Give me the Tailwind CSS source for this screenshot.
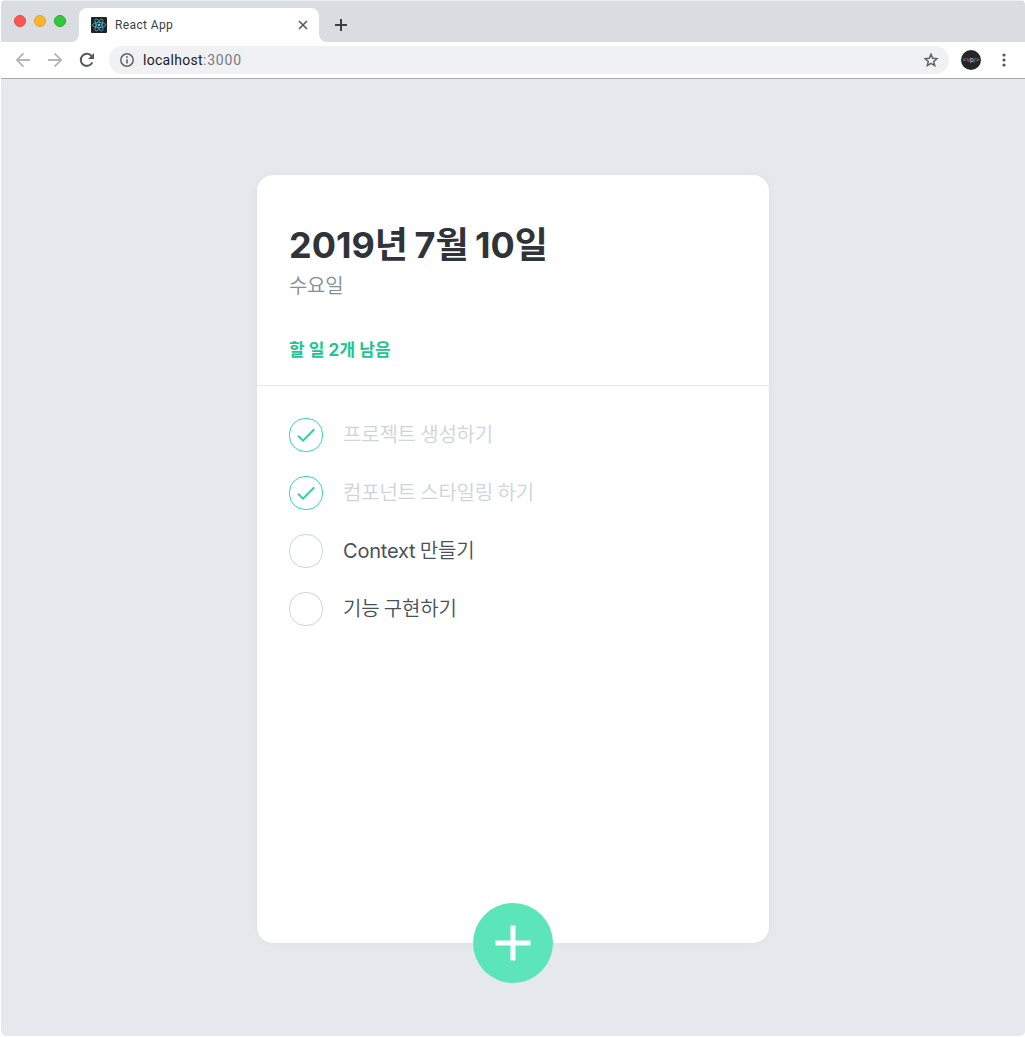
<!DOCTYPE html>
<html lang="ko">
<head>
<meta charset="utf-8">
<title>React App</title>
<script src="https://cdn.jsdelivr.net/npm/@tailwindcss/browser@4"></script>
</head>
<body class="bg-white h-[1037px] overflow-hidden pl-px font-['Inter','Noto_Sans_CJK_KR',sans-serif]">
<div class="h-[1036px] w-[1024px] rounded-[5px] overflow-hidden bg-[#e5e8ed] flex flex-col">
  <!-- tab strip -->
  <header class="h-[42px] shrink-0 bg-[#d9dce1] border-t border-[#eceef1] flex">
    <div class="w-[78px] bg-white shrink-0"><div class="h-full bg-[#d9dce1] rounded-br-lg flex gap-2 pl-[13px] pt-[14px]">
      <span class="size-3 rounded-full bg-[#fc5753] border border-[#df4744]"></span>
      <span class="size-3 rounded-full bg-[#fdb62c] border border-[#de9f34]"></span>
      <span class="size-3 rounded-full bg-[#33c73b] border border-[#27a930]"></span>
    </div></div>
    <div class="w-[240px] shrink-0 bg-[#d9dce1] pt-[7px]"><div class="h-full bg-white rounded-t-lg flex items-center pl-3 pr-[11px]">
      <svg class="size-4" viewBox="0 0 16 16" fill="none"><rect width="16" height="16" rx="1" fill="#222"/><g stroke="#4fb5d5" stroke-width=".75"><ellipse cx="8" cy="8" rx="6.6" ry="2.6"/><ellipse cx="8" cy="8" rx="6.6" ry="2.6" transform="rotate(60 8 8)"/><ellipse cx="8" cy="8" rx="6.6" ry="2.6" transform="rotate(120 8 8)"/></g><circle cx="8" cy="8" r="1.3" fill="#61dafb"/></svg>
      <span class="ml-2 text-[12px] leading-4 text-[#3c4043] font-['Roboto'] tracking-[.37px]">React App</span>
      <svg class="ml-auto size-[10px]" viewBox="0 0 10 10" stroke="#55595e" stroke-width="1.6"><path d="M1 1l8 8M9 1l-8 8"/></svg>
    </div></div>
    <div class="grow bg-white"><div class="h-full bg-[#d9dce1] rounded-bl-lg pl-4 pt-[18px]">
      <svg class="size-3" viewBox="0 0 12 12" stroke="#3c4043" stroke-width="2"><path d="M6 0v12M0 6h12"/></svg>
    </div></div>
  </header>
  <!-- toolbar -->
  <nav class="h-[37px] shrink-0 bg-white border-b border-[#a9abb0] flex items-center">
    <svg class="ml-[14px] size-4" viewBox="0 0 16 16" fill="none" stroke="#b4b6b9" stroke-width="1.8"><path d="M15 8H2M8.5 1.3L1.8 8l6.7 6.7"/></svg>
    <svg class="ml-4 size-4" viewBox="0 0 16 16" fill="none" stroke="#b4b6b9" stroke-width="1.8"><path d="M1 8h13M7.500 1.300L14.200 8l-6.700 6.700"/></svg>
    <svg class="ml-4 size-4" viewBox="0 0 16 16" fill="none"><path d="M13.300 10.300A6 6 0 1 1 12.600 4.200" stroke="#54585d" stroke-width="2"/><path d="M15 1v6H9z" fill="#54585d"/></svg>
    <div class="ml-[14px] h-7 w-[840px] rounded-full bg-[#eff1f3] flex items-center pl-[11px] pr-[11px]">
      <svg class="size-[14px]" viewBox="0 0 14 14" fill="none"><circle cx="7" cy="7" r="6.200" stroke="#5f6368" stroke-width="1.500"/><path d="M7 6.200v4.300M7 3.300v1.600" stroke="#5f6368" stroke-width="1.600"/></svg>
      <span class="ml-[9px] text-[14px] leading-4 text-[#202124] font-['Roboto'] tracking-[.3px]">localhost<span class="text-[#777b80] tracking-[.8px]">:3000</span></span>
      <svg class="ml-auto size-[14px]" viewBox="0 0 14 14" fill="none" stroke="#5f6368" stroke-width="1.500"><path d="M7 1.200l1.700 4 4.300.4-3.300 2.800 1 4.200L7 10.400l-3.700 2.200 1-4.200L1 5.600l4.300-.4z"/></svg>
    </div>
    <div class="ml-3 size-5 rounded-full bg-[#252627] flex items-center justify-center text-[6px] leading-none text-[#aaa] font-['Inter']">&lt;<span class="text-[#e6306a] font-bold">v</span><span class="text-[#ddd]">p</span>/&gt;</div>
    <svg class="ml-[21px] w-1 h-[14px]" viewBox="0 0 4 14" fill="#55595e"><circle cx="2" cy="2" r="1.600"/><circle cx="2" cy="7" r="1.600"/><circle cx="2" cy="12" r="1.600"/></svg>
  </nav>
  <!-- todo card -->
  <main class="relative mt-24 mx-auto w-[512px] h-[768px] shrink-0 rounded-2xl bg-white shadow-[0_0_8px_rgba(0,0,0,0.04)]">
    <div class="h-[211px] border-b border-[#e5e7ec] pl-8 pt-[49px]">
      <h1 class="h-[43px] leading-[43px] text-[36px] font-bold text-[#2f3439] whitespace-nowrap [word-spacing:-2px]">2019년 7월 10일</h1>
      <div class="mt-[5px] h-[29px] leading-[29px] text-[20px] font-[350] text-[#868e96] tracking-[-.3px]">수요일</div>
      <div class="mt-[39px] h-5 leading-5 text-[17px] font-bold text-[#20c58f] tracking-[.07px]">할 일 2개 남음</div>
    </div>
    <ul class="pl-8 pt-5 text-[20px] font-[350] text-[#495057] tracking-[-.2px] [word-spacing:-1px]">
      <li class="h-[58px] flex items-center text-[#ced4da]"><span class="size-[34px] mr-5 rounded-2xl border border-[#38d9a9] text-[#30d09c] flex items-center justify-center"><svg class="size-6" viewBox="0 0 24 24" fill="currentColor"><path d="M9 16.200L4.800 12l-1.400 1.400L9 19 21 7l-1.400-1.400L9 16.200z"/></svg></span><span>프로젝트 생성하기</span></li>
      <li class="h-[58px] flex items-center text-[#ced4da]"><span class="size-[34px] mr-5 rounded-2xl border border-[#38d9a9] text-[#30d09c] flex items-center justify-center"><svg class="size-6" viewBox="0 0 24 24" fill="currentColor"><path d="M9 16.200L4.800 12l-1.400 1.400L9 19 21 7l-1.400-1.400L9 16.200z"/></svg></span><span>컴포넌트 스타일링 하기</span></li>
      <li class="h-[58px] flex items-center"><span class="size-[34px] mr-5 rounded-2xl border border-[#ced4da]"></span><span><span class="font-normal">Context</span> 만들기</span></li>
      <li class="h-[58px] flex items-center"><span class="size-[34px] mr-5 rounded-2xl border border-[#ced4da]"></span><span>기능 구현하기</span></li>
    </ul>
    <button class="absolute left-[216px] bottom-[-40px] size-20 rounded-full bg-[#5ce5b9] flex items-center justify-center"><svg class="size-9" viewBox="0 0 36 36" stroke="#fff" stroke-width="5"><path d="M18 .5v35M.5 18h35"/></svg></button>
  </main>
</div>
</body>
</html>
